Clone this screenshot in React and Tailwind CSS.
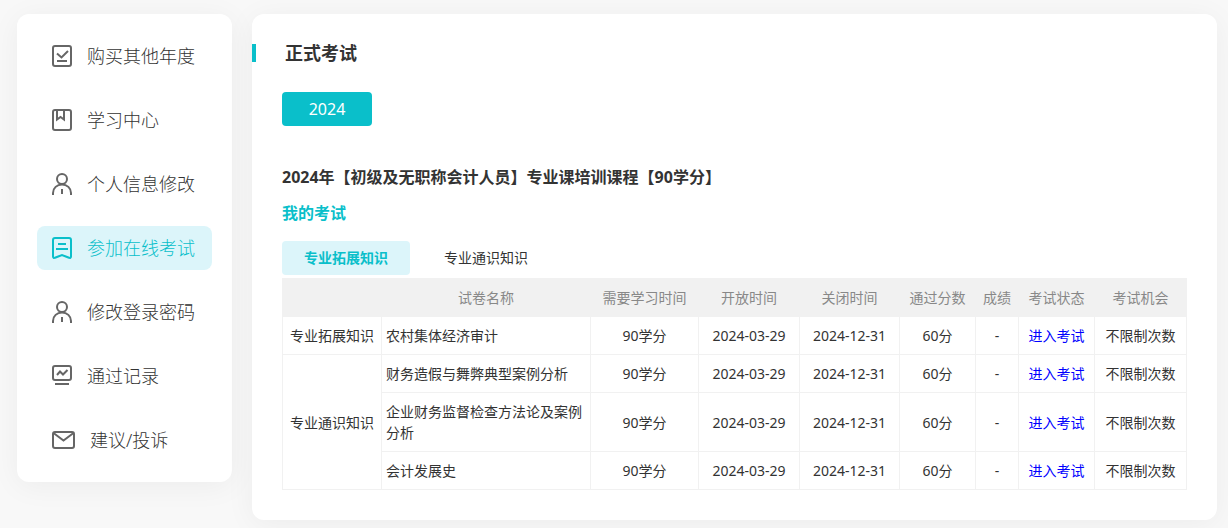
import { useState } from 'react'

function OrderIcon() {
  return (
    <svg width="20" height="22" viewBox="0 0 20 22" fill="none" stroke="currentColor" strokeWidth="2">
      <rect x="1" y="1" width="18" height="20" rx="2" />
      <path d="M5 8.500l4.500 4L16 6" />
      <path d="M5 16h10" />
    </svg>
  )
}

function BookIcon() {
  return (
    <svg width="20" height="22" viewBox="0 0 20 22" fill="none" stroke="currentColor" strokeWidth="2">
      <rect x="1" y="1" width="18" height="20" rx="2" />
      <path d="M5 1v9.500l3.500-2.500L12 10.500V1" />
    </svg>
  )
}

function UserIcon() {
  return (
    <svg width="20" height="22" viewBox="0 0 20 22" fill="none" stroke="currentColor" strokeWidth="2">
      <circle cx="10" cy="6" r="5" />
      <path d="M1 22v-2c0-5 4-8.500 9-8.500s9 3.500 9 8.500v2" />
      <path d="M10 16v5" />
    </svg>
  )
}

function ExamIcon() {
  return (
    <svg width="20" height="22" viewBox="0 0 20 22" fill="none" stroke="currentColor" strokeWidth="2">
      <path d="M3 1h14a2 2 0 0 1 2 2v16.500c0 1.300-1 1.800-2 1.200L10 18l-7 2.700c-1 .6-2 .1-2-1.200V3a2 2 0 0 1 2-2z" />
      <path d="M6 7h8M4 12h12" />
    </svg>
  )
}

function RecordIcon() {
  return (
    <svg width="20" height="22" viewBox="0 0 20 22" fill="none" stroke="currentColor" strokeWidth="2">
      <rect x="1" y="1" width="18" height="14" rx="2" />
      <path d="M5 10l3-3.500 3 3L15.500 5" />
      <path d="M3 19h14" />
    </svg>
  )
}

function MailIcon() {
  return (
    <svg width="23" height="18" viewBox="0 0 23 18" fill="none" stroke="currentColor" strokeWidth="2">
      <rect x="1" y="1" width="21" height="16" rx="2" />
      <path d="M1.500 2l10 7.500 10-7.500" />
    </svg>
  )
}

const menu = [
  { label: '购买其他年度', icon: OrderIcon },
  { label: '学习中心', icon: BookIcon },
  { label: '个人信息修改', icon: UserIcon },
  { label: '参加在线考试', icon: ExamIcon, active: true },
  { label: '修改登录密码', icon: UserIcon },
  { label: '通过记录', icon: RecordIcon },
  { label: '建议/投诉', icon: MailIcon },
]

const tabs = ['专业拓展知识', '专业通识知识']

const columns = [
  { title: '', width: 'w-[99px]' },
  { title: '试卷名称', width: 'w-[209px]' },
  { title: '需要学习时间', width: 'w-[108px]' },
  { title: '开放时间', width: 'w-[101px]' },
  { title: '关闭时间', width: 'w-[100px]' },
  { title: '通过分数', width: 'w-[76px]' },
  { title: '成绩', width: 'w-[43px]' },
  { title: '考试状态', width: 'w-[76px]' },
  { title: '考试机会', width: 'w-[92px]' },
]

const groups = [
  { category: '专业拓展知识', exams: ['农村集体经济审计'] },
  {
    category: '专业通识知识',
    exams: ['财务造假与舞弊典型案例分析', '企业财务监督检查方法论及案例分析', '会计发展史'],
  },
]

const cell = 'border border-[#f1f1f1] px-1 py-2'

export default function App() {
  const [tab, setTab] = useState(tabs[0])

  return (
    <div className="min-h-screen flex items-start gap-5 bg-[#f8f8f8] pt-[14px] pb-2 pl-[17px] pr-[11px] text-[#333] font-['Noto_Sans','Noto_Sans_CJK_SC',sans-serif]">
      {/* Sidebar */}
      <nav className="w-[215px] shrink-0 flex flex-col gap-5 p-5 rounded-xl bg-white shadow-[0_4px_30px_rgba(0,0,0,0.05)]">
        {menu.map(({ label, icon: Icon, active }) => (
          <a
            key={label}
            href="#"
            className={`flex items-center h-11 gap-[15px] px-[15px] rounded-lg text-lg font-light whitespace-nowrap ${active ? 'bg-[#dcf5fa] text-[#0abfca]' : ''}`}
          >
            <span className={active ? '' : 'text-[#666]'}>
              <Icon />
            </span>
            {label}
          </a>
        ))}
      </nav>

      {/* Content */}
      <main className="flex-1 min-w-0 py-[30px] rounded-xl bg-white shadow-[0_4px_30px_rgba(0,0,0,0.05)]">
        <h1 className="border-l-4 border-[#0abfca] pl-[29px] text-lg leading-[18px] font-bold">正式考试</h1>

        <div className="px-[30px] pt-[30px]">
          <button type="button" className="block w-[90px] h-[34px] rounded bg-[#0abfca] text-white">2024</button>

          <h2 className="mt-[39px] leading-6 font-bold">2024年【初级及无职称会计人员】专业课培训课程【90学分】</h2>
          <h3 className="mt-3 leading-6 font-bold text-[#0abfca]">我的考试</h3>

          {/* Tabs */}
          <div className="mt-4 mb-[3px] flex gap-3 text-sm">
            {tabs.map((name) => (
              <button
                key={name}
                type="button"
                onClick={() => setTab(name)}
                className={`w-32 h-[34px] rounded ${tab === name ? 'bg-[#dcf5fa] text-[#0abfca] font-bold' : ''}`}
              >
                {name}
              </button>
            ))}
          </div>

          <table className="w-full table-fixed border-collapse text-sm leading-[21px] text-center">
            <colgroup>
              {columns.map((col, i) => (
                <col key={i} className={col.width} />
              ))}
            </colgroup>
            <thead>
              <tr className="bg-[#f1f1f1] text-[#888]">
                {columns.map((col, i) => (
                  <th key={i} className={`${cell} font-normal`}>{col.title}</th>
                ))}
              </tr>
            </thead>
            <tbody>
              {groups.map((group) =>
                group.exams.map((exam, i) => (
                  <tr key={exam}>
                    {i === 0 && <td rowSpan={group.exams.length} className={cell}>{group.category}</td>}
                    <td className={`${cell} text-left`}>{exam}</td>
                    <td className={cell}>90学分</td>
                    <td className={cell}>2024-03-29</td>
                    <td className={cell}>2024-12-31</td>
                    <td className={cell}>60分</td>
                    <td className={cell}>-</td>
                    <td className={cell}>
                      <a href="#" className="text-[#0000ff]">进入考试</a>
                    </td>
                    <td className={cell}>不限制次数</td>
                  </tr>
                ))
              )}
            </tbody>
          </table>
        </div>
      </main>
    </div>
  )
}
